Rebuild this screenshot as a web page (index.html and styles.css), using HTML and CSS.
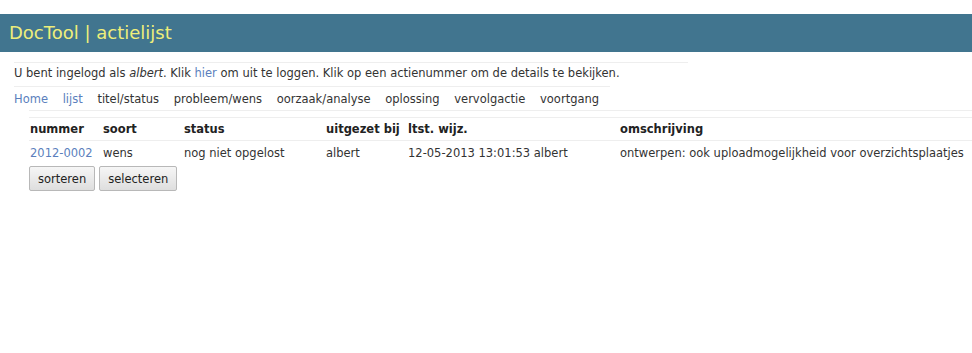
FILE: index.html
```html
<!DOCTYPE html>
<html>
  <head>
    <meta http-equiv="Content-Type" content="text/html;charset=utf-8" />
    <title>DocTool | actielijst</title>
    <link rel="stylesheet" href="styles.css">
  </head>
  <body>
    <h1 class="banner">DocTool | actielijst</h1>

    <p class="login">
      U bent ingelogd als <i>albert</i>. Klik <a href="#">hier</a> om uit te loggen.
      Klik op een actienummer om de details te bekijken.
    </p>

    <ul class="tabs">
      <li><a href="#">Home</a></li>
      <li><a href="#">lijst</a></li>
      <li>titel/status</li>
      <li>probleem/wens</li>
      <li>oorzaak/analyse</li>
      <li>oplossing</li>
      <li>vervolgactie</li>
      <li>voortgang</li>
    </ul>

    <div class="main">
      <table class="acties">
        <tr>
          <th class="c-nr">nummer</th>
          <th class="c-soort">soort</th>
          <th class="c-status">status</th>
          <th class="c-bij">uitgezet bij</th>
          <th class="c-wijz">ltst. wijz.</th>
          <th>omschrijving</th>
        </tr>
        <tr>
          <td><a href="#">2012-0002</a></td>
          <td>wens</td>
          <td>nog niet opgelost</td>
          <td>albert</td>
          <td>12-05-2013 13:01:53 albert</td>
          <td>ontwerpen: ook uploadmogelijkheid voor overzichtsplaatjes</td>
        </tr>
      </table>
      <div class="knoppen">
        <button>sorteren</button>
        <button>selecteren</button>
      </div>
    </div>
  </body>
</html>
```

FILE: styles.css
```css
body {
  margin: 0;
  padding-top: 14px;
  font-family: "DejaVu Sans", Verdana, sans-serif;
  font-size: 11.5px;
  color: #333;
  background: white;
}

a {
  color: #5b7fbd;
  text-decoration: none;
}

.banner {
  margin: 0;
  height: 38px;
  padding: 0 9px;
  line-height: 38px;
  font-size: 18px;
  font-weight: normal;
  background-color: #41758f;
  color: #eeee7a;
}

.login {
  width: 674px;
  margin: 10px 0 0 14px;
  padding: 4px 0 6px 0;
  line-height: 13px;
  border-top: 1px solid #eee;
}

.tabs {
  display: inline-block;
  margin: 0 0 0 14px;
  padding: 6px 0 4px 0;
  line-height: 13px;
  list-style: none;
  border-top: 1px solid #eee;
}

.tabs li {
  display: inline-block;
  padding-right: 15px;
  margin-right: -4px;
}

.main {
  margin-left: 29px;
  border-top: 1px solid #eee;
}

.acties {
  width: 100%;
  margin-top: 6px;
  border-collapse: collapse;
  border-top: 1px solid #eee;
}

.acties th,
.acties td {
  padding: 5px 1px 4px 1px;
  line-height: 13px;
  text-align: left;
  vertical-align: top;
  white-space: nowrap;
}

.acties th {
  color: #222;
  border-bottom: 1px solid #eee;
}

.acties td {
  padding-top: 6px;
}

.c-nr { width: 71px; }
.c-soort { width: 79px; }
.c-status { width: 140px; }
.c-bij { width: 80px; }
.c-wijz { width: 210px; }

.knoppen {
  display: flex;
  gap: 4px;
  margin-top: 2px;
}

.knoppen button {
  height: 25px;
  padding: 0 8px;
  font-family: "DejaVu Sans", Verdana, sans-serif;
  font-size: 11.5px;
  color: #222;
  background: linear-gradient(#f6f6f6, #dedede);
  border: 1px solid #b8b8b8;
  border-radius: 2px;
}
```
